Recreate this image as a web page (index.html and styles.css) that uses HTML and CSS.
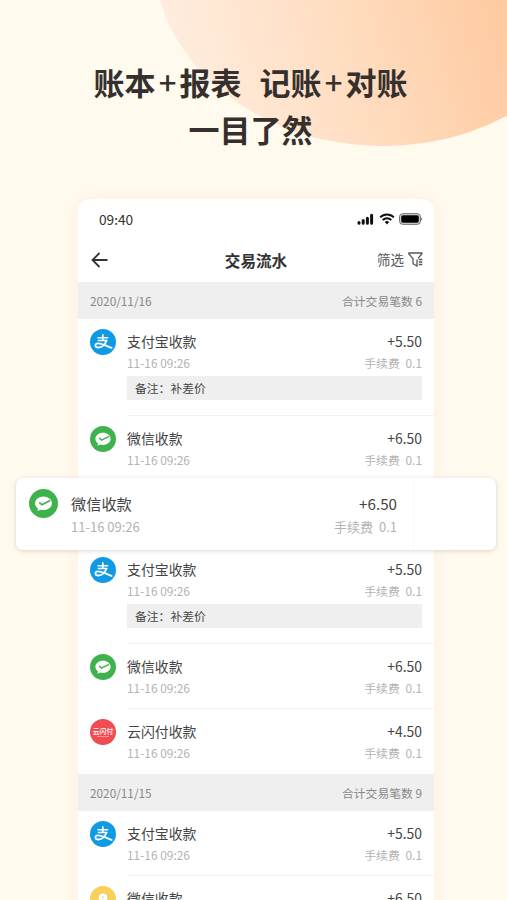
FILE: index.html
```html
<!DOCTYPE html>
<html lang="zh-CN">
<head>
  <meta charset="UTF-8" />
  <meta name="viewport" content="width=device-width, initial-scale=1" />
  <title>交易流水</title>
  <link rel="stylesheet" href="styles.css">
</head>
<body>
<svg class="symbols" width="0" height="0">
  <symbol id="alipay" viewBox="0 0 26 26">
    <circle cx="13" cy="13" r="13" fill="#0f9be3"/>
    <g fill="none" stroke="#fff" stroke-linecap="round">
      <path d="M8 8.700h9.600M12.800 5.800v5.600M8.400 11.500h8.400" stroke-width="1.600"/>
      <path d="M16.400 11.800c-1.200 3.400-4.200 6.700-8 6.700c-3.600 0-4.100-3.900-.6-4.100c3.800-.2 7.600 2.200 13.800 4.500" stroke-width="1.800"/>
    </g>
  </symbol>
  <symbol id="wechat" viewBox="0 0 26 26">
    <circle cx="13" cy="13" r="13" fill="#3eb34d"/>
    <path d="M13 6.700c-4.200 0-7.600 2.700-7.600 6.100c0 1.900 1 3.500 2.600 4.600l-.4 2.300l2.700-1.200c.9.300 1.800.4 2.700.4c4.200 0 7.600-2.700 7.600-6.100s-3.400-6.100-7.600-6.100z" fill="#fff"/>
    <path d="M9.200 11.900l2.400 2.300l7.400-3.900" fill="none" stroke="#3eb34d" stroke-width="1.500"/>
  </symbol>
  <symbol id="bell" viewBox="0 0 26 26">
    <circle cx="13" cy="13" r="13" fill="#f8cf58"/>
    <path d="M13 7.400c-2.600 0-4.300 1.600-4.300 4v2.600l-2.200 2.500v2h13v-2l-2.200-2.500v-2.600c0-2.400-1.700-4-4.300-4z" fill="#fff"/>
    <path d="M13 10.500v1.500M11.500 14.500h3" stroke="#f8cf58" stroke-width="1.500"/>
  </symbol>
</svg>

<div class="decor"></div>
<h1>账本<span class="plus">+</span>报表<span class="gap"> </span>记账<span class="plus">+</span>对账<br>一目了然</h1>

<div class="phone">
  <div class="status">
    <span>09:40</span>
    <svg width="66" height="12" viewBox="0 0 66 12">
      <path d="M2 10.300V9.500M6.200 10.300V7.500M10.400 10.300V5.200M14.600 10.300V2.200" stroke="#111" stroke-width="3" stroke-linecap="round"/>
      <g fill="none" stroke="#111" stroke-width="2">
        <path d="M23.200 4.400a9.500 9.500 0 0 1 13.600 0M25.700 7.100a6 6 0 0 1 8.600 0"/>
      </g>
      <path d="M30 11.600l-2.200-2.500a3 3 0 0 1 4.400 0z" fill="#111"/>
      <rect x="42.600" y=".7" width="20.800" height="10.600" rx="3" fill="#ddd" stroke="#666" stroke-width="1"/>
      <rect x="44.200" y="2.300" width="17.600" height="7.400" rx="1.600" fill="#000"/>
      <path d="M64.300 4.200q1.800 1.800 0 3.600z" fill="#555"/>
    </svg>
  </div>
  <div class="nav">
    <svg width="17" height="16" viewBox="0 0 17 16" fill="none" stroke="#333" stroke-width="1.800">
      <path d="M8.500 1L1.500 8l7 7M1.500 8h15"/>
    </svg>
    <h2>交易流水</h2>
    <div class="filter">筛选
      <svg width="15" height="15" viewBox="0 0 15 15" fill="none" stroke="#555" stroke-width="1.300">
        <path d="M10 6.300L13.800 1.900V1H.9v.9l4.100 4.800v5l4 2.300V7.500M10.800 7.500h3.500M10.800 10h3.500M10.800 12.500h3.500"/>
      </svg>
    </div>
  </div>

  <div class="day"><span>2020/11/16</span><span>合计交易笔数 6</span></div>
  <div class="row">
    <svg class="icon"><use href="#alipay"/></svg>
    <div class="info">
      <div class="line"><span>支付宝收款</span><span>+5.50</span></div>
      <div class="sub"><span>11-16 09:26</span><span class="fee">手续费 0.1</span></div>
      <div class="note">备注：补差价</div>
    </div>
  </div>
  <div class="row">
    <svg class="icon"><use href="#wechat"/></svg>
    <div class="info">
      <div class="line"><span>微信收款</span><span>+6.50</span></div>
      <div class="sub"><span>11-16 09:26</span><span class="fee">手续费 0.1</span></div>
    </div>
  </div>
  <div class="row raised">
    <svg class="icon"><use href="#wechat"/></svg>
    <div class="info">
      <div class="line"><span>微信收款</span><span>+6.50</span></div>
      <div class="sub"><span>11-16 09:26</span><span class="fee">手续费 0.1</span></div>
    </div>
    <div class="action"></div>
  </div>
  <div class="row">
    <svg class="icon"><use href="#alipay"/></svg>
    <div class="info">
      <div class="line"><span>支付宝收款</span><span>+5.50</span></div>
      <div class="sub"><span>11-16 09:26</span><span class="fee">手续费 0.1</span></div>
      <div class="note">备注：补差价</div>
    </div>
  </div>
  <div class="row">
    <svg class="icon"><use href="#wechat"/></svg>
    <div class="info">
      <div class="line"><span>微信收款</span><span>+6.50</span></div>
      <div class="sub"><span>11-16 09:26</span><span class="fee">手续费 0.1</span></div>
    </div>
  </div>
  <div class="row">
    <svg class="icon" viewBox="0 0 26 26">
      <circle cx="13" cy="13" r="13" fill="#ef4b50"/>
      <text x="13" y="15.200" text-anchor="middle" class="logo-text">云闪付</text>
      <path d="M7 17.600h12" stroke="#fff" stroke-width=".8" opacity=".6"/>
    </svg>
    <div class="info last">
      <div class="line"><span>云闪付收款</span><span>+4.50</span></div>
      <div class="sub"><span>11-16 09:26</span><span class="fee">手续费 0.1</span></div>
    </div>
  </div>

  <div class="day"><span>2020/11/15</span><span>合计交易笔数 9</span></div>
  <div class="row">
    <svg class="icon"><use href="#alipay"/></svg>
    <div class="info">
      <div class="line"><span>支付宝收款</span><span>+5.50</span></div>
      <div class="sub"><span>11-16 09:26</span><span class="fee">手续费 0.1</span></div>
    </div>
  </div>
  <div class="row">
    <svg class="icon"><use href="#bell"/></svg>
    <div class="info">
      <div class="line"><span>微信收款</span><span>+6.50</span></div>
      <div class="sub"><span>11-16 09:26</span><span class="fee">手续费 0.1</span></div>
    </div>
  </div>
</div>
</body>
</html>
```

FILE: styles.css
```css
* {
  box-sizing: border-box;
}
body {
  margin: 0;
  height: 900px;
  overflow: hidden;
  position: relative;
  background: #fffaee;
  color: #444;
  font-family: "Noto Sans CJK SC", "Noto Sans", sans-serif;
}
.symbols {
  position: absolute;
}
.decor {
  position: absolute;
  top: 0;
  right: 0;
  width: 354px;
  height: 146px;
  background: linear-gradient(75deg, #ffeddf 10%, #ffdfc4 50%, #fecaa0 100%);
  clip-path: ellipse(230px 192px at 230px -46px);
}
h1 {
  position: relative;
  margin: 0;
  padding: 58px 6px 0 0;
  height: 199px;
  font-size: 31px;
  line-height: 47px;
  font-weight: 700;
  text-align: center;
  color: #35302d;
  white-space: nowrap;
}
.plus {
  display: inline-block;
  width: 24px;
  font-weight: 500;
}
.gap {
  display: inline-block;
  width: 18px;
}

.phone {
  position: relative;
  width: 356px;
  margin-left: 78px;
  background: #fff;
  border-radius: 12px 12px 0 0;
  box-shadow: 0 0 12px rgba(250, 200, 160, 0.25);
}
.status {
  display: flex;
  align-items: center;
  justify-content: space-between;
  height: 39px;
  padding: 0 11px 0 21px;
  font-size: 13.7px;
  color: #333;
}
.nav {
  display: grid;
  grid-template-columns: 1fr auto 1fr;
  align-items: center;
  height: 44px;
  padding: 0 11px 0 13px;
}
h2 {
  margin: 0 2px 1px 0;
  font-size: 15.6px;
  font-weight: 700;
  color: #333;
}
.filter {
  display: flex;
  align-items: center;
  justify-content: flex-end;
  gap: 4px;
  margin-bottom: 2px;
  font-size: 13.5px;
  color: #555;
}
.day {
  display: flex;
  align-items: center;
  justify-content: space-between;
  height: 37px;
  padding: 0 12px 1px;
  background: #efefef;
  font-size: 11.8px;
  color: #888;
}

.row {
  display: flex;
}
.icon {
  flex: none;
  width: 26px;
  height: 26px;
  margin: 10px 11.5px 0 11.5px;
}
.logo-text {
  font-size: 6.8px;
  font-weight: 500;
  fill: #fff;
}
.info {
  flex: 1;
  min-height: 65px;
  padding: 12px 12px 0 0;
  border-bottom: 1px solid #f3f3f3;
}
.info.last {
  border-bottom: none;
}
.line, .sub {
  display: flex;
  justify-content: space-between;
}
.line {
  font-size: 13.9px;
  line-height: 21px;
}
.sub {
  font-size: 11.9px;
  line-height: 22px;
  color: #b3b3b3;
}
.fee {
  word-spacing: 3px;
}
.note {
  height: 24px;
  margin: 2px 0 15px;
  padding-left: 8px;
  background: #efefef;
  font-size: 11.8px;
  line-height: 24px;
}

/* swiped row, lifted above the list */
.raised {
  position: relative;
  height: 72px;
  width: 480px;
  margin: -3px 0 -3px -62px;
  background: #fff;
  border-radius: 7px;
  box-shadow: 0 1px 4px rgba(120, 100, 80, 0.25);
}
.raised .icon {
  width: 29px;
  height: 29px;
  margin: 11px 13px 0 13px;
}
.raised .info {
  border: none;
  padding: 14px 16px 0 0;
}
.raised .line {
  font-size: 15.2px;
  line-height: 23px;
}
.raised .sub {
  font-size: 13px;
  line-height: 24px;
}
.action {
  width: 83px;
  border-left: 1px solid #fdf9f3;
}
```
